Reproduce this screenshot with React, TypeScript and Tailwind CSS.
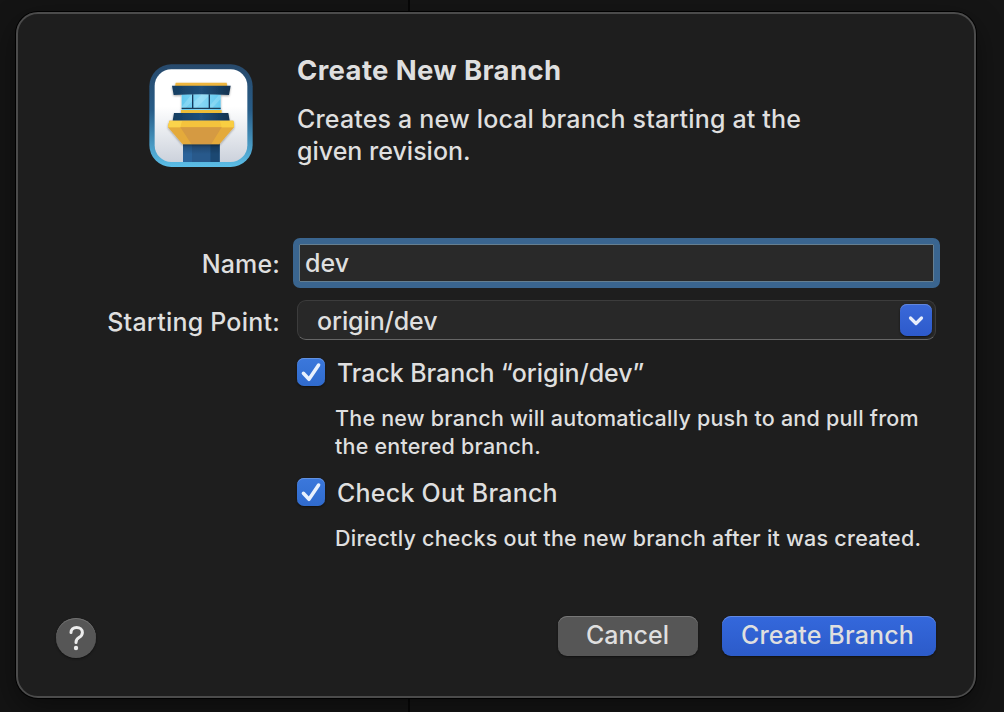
import React, { useState } from "react";

function TowerIcon() {
  return (
    <svg width="104" height="104" viewBox="27 27 312 312" className="block shrink-0" aria-hidden="true">
      <defs>
        <linearGradient id="frame" x1="0" y1="0" x2="0" y2="1">
          <stop offset="0" stopColor="#27496b" />
          <stop offset="0.45" stopColor="#285d88" />
          <stop offset="1" stopColor="#5cbfe8" />
        </linearGradient>
        <linearGradient id="sky" x1="0" y1="0" x2="0" y2="1">
          <stop offset="0.4" stopColor="#ffffff" />
          <stop offset="1" stopColor="#ccd2dc" />
        </linearGradient>
        <linearGradient id="navy" x1="0" y1="0" x2="1" y2="0">
          <stop offset="0" stopColor="#163d60" />
          <stop offset="0.5" stopColor="#20507a" />
          <stop offset="1" stopColor="#14324f" />
        </linearGradient>
        <linearGradient id="glass" x1="0" y1="0" x2="1" y2="0">
          <stop offset="0" stopColor="#62c8ee" />
          <stop offset="0.5" stopColor="#86d8f5" />
          <stop offset="1" stopColor="#62c8ee" />
        </linearGradient>
        <linearGradient id="shaft" x1="0" y1="0" x2="0" y2="1">
          <stop offset="0" stopColor="#000000" stopOpacity="0.3" />
          <stop offset="0.6" stopColor="#000000" stopOpacity="0" />
        </linearGradient>
        <filter id="soft" x="-20%" y="-20%" width="140%" height="140%">
          <feDropShadow dx="0" dy="3" stdDeviation="3" floodColor="#000" floodOpacity="0.35" />
        </filter>
      </defs>
      <rect x="28" y="28" width="310" height="308" rx="66" fill="url(#frame)" />
      <rect x="44" y="43" width="278" height="278" rx="50" fill="url(#sky)" />
      <path d="M129 262H239V321H129Z" fill="#2b639a" />
      <path d="M156 262H211V321H156Z" fill="#28598b" />
      <path d="M211 262H239V321H211Z" fill="#1b4872" />
      <path d="M129 262H239V321H129Z" fill="url(#shaft)" />
      <g filter="url(#soft)">
        <path d="M107 83H260L262 96H105Z" fill="#eeb53c" />
        <path d="M125 118H242V166H125Z" fill="url(#glass)" />
        <path d="M125 155L155 118H160V135L136 160H125Z" fill="#b1e7fa" opacity="0.35" />
        <path d="M162 140L186 118H205V124L168 160H162Z" fill="#c2effd" opacity="0.3" />
        <path d="M211 150L236 121H242V132L216 160H211Z" fill="#b1e7fa" opacity="0.35" />
        <path d="M158 118V162M208 118V162" stroke="#15385a" strokeWidth="4" />
        <path d="M125 160H242" stroke="#1a3c59" strokeWidth="4" />
        <path d="M96 92H272L267 120Q184 116 101 120Z" fill="url(#navy)" />
        <path d="M123 165H245V176H123Z" fill="#efbe39" />
        <path d="M102 174H265L269 197H98Z" fill="url(#navy)" />
        <path d="M88 197H280L282 217L238 268H128L84 217Z" fill="#e4aa3b" />
        <path d="M84 217L88 197H280L282 217H240L124 217Z" fill="#f4c33d" />
        <path d="M88 198H126L121 217H84Z" fill="#fbd34b" />
        <path d="M240 198H280L282 217H245Z" fill="#f9ce42" />
        <path d="M121 217H245L214 267H154Z" fill="#d59a42" />
      </g>
    </svg>
  );
}

type OptionProps = {
  label: string;
  labelClass: string;
  checked: boolean;
  onToggle: () => void;
};

function CheckOption({ label, labelClass, checked, onToggle }: OptionProps) {
  return (
    <button
      type="button"
      role="checkbox"
      aria-checked={checked}
      onClick={onToggle}
      className="flex h-7 items-center gap-3 whitespace-nowrap text-left text-[25px] leading-7"
    >
      <span className="h-7 w-7 shrink-0 rounded-[7px] bg-linear-to-b from-[#3b78dc] to-[#306bce] shadow-[inset_0_1px_0_#6292e2,0_1px_2px_#111111]">
        {checked && (
          <svg width="28" height="28" viewBox="0 0 28 28" fill="none" aria-hidden="true">
            <path d="M6.4 15.3L12 21.3L21.6 7" stroke="#e9f1fd" strokeWidth="3.5" strokeLinecap="round" strokeLinejoin="round" />
          </svg>
        )}
      </span>
      <span className={labelClass}>{label}</span>
    </button>
  );
}

export default function App() {
  const [name, setName] = useState("dev");
  const [track, setTrack] = useState(true);
  const [checkout, setCheckout] = useState(true);

  return (
    <div className="flex h-[712px] w-[1004px] items-start overflow-hidden bg-[linear-gradient(to_right,#141414_408px,#070707_408px,#070707_410px,#151515_410px)] pl-4 pt-3 font-['Inter','Liberation_Sans',sans-serif] font-[450] text-[#dfdfdf]">
      <div
        role="dialog"
        aria-label="Create New Branch"
        className="flex h-[686px] w-[960px] shrink-0 flex-col rounded-[22px] border-2 border-[#4b4b4b] bg-[#1e1e1e] shadow-[0_0_0_1px_#000000,0_10px_30px_#00000070]"
      >
        <header className="flex h-[224px] items-start pl-[131px] pt-[40px]">
          <div className="pt-[10px]">
            <TowerIcon />
          </div>
          <div className="ml-[44px] whitespace-nowrap text-[25px] leading-8">
            <h1 className="text-[27.5px] font-bold leading-8 tracking-[0.35px]">Create New Branch</h1>
            <p className="mt-[17px] tracking-[0.17px]">
              Creates a new local branch starting at the
              <br />
              <span className="tracking-[0px]">given revision.</span>
            </p>
          </div>
        </header>

        <div className="grid grid-cols-[262px_647px] items-center gap-x-[13px] text-[25px] leading-8">
          <label htmlFor="branch-name" className="pt-[2px] text-right tracking-[0.15px]">Name:</label>
          <input
            id="branch-name"
            value={name}
            onChange={(e) => setName(e.target.value)}
            className="h-[50px] w-full rounded-[7px] border-6 border-[#3a658f] bg-[#292929] bg-clip-padding px-[6px] shadow-[inset_0_0_0_1px_#657f91] outline-none"
          />
        </div>

        <div className="mt-3 grid grid-cols-[262px_639px] items-center gap-x-[17px] text-[25px] leading-8">
          <span className="whitespace-nowrap pt-[4px] text-right tracking-[0.22px]">Starting Point:</span>
          <div className="flex h-10 items-center justify-between rounded-[9px] border border-[#3c3c3c] border-b-[#666666] bg-[#282828] pl-[19px] pr-[3px]">
            <span className="pt-[2px] tracking-[-0.1px]">origin/dev</span>
            <button
              type="button"
              aria-label="Show branches"
              className="flex h-8 w-8 items-center justify-center rounded-[7px] bg-linear-to-b from-[#3a69d9] to-[#2d5acb] shadow-[inset_0_1px_0_#6286db,0_1px_2px_#111111]"
            >
              <svg width="32" height="32" viewBox="0 0 32 32" fill="none" aria-hidden="true">
                <path d="M10.5 14L16 19.5L21.5 14" stroke="#e7edfb" strokeWidth="3.2" strokeLinecap="round" strokeLinejoin="round" />
              </svg>
            </button>
          </div>
        </div>

        <div className="ml-[279px] mt-[18px] flex flex-col items-start">
          <CheckOption label="Track Branch “origin/dev”" labelClass="pt-[2px] tracking-[-0.08px]" checked={track} onToggle={() => setTrack(!track)} />
          <p className="ml-[38px] mt-[18px] whitespace-nowrap text-[21.5px] leading-7 tracking-[0.21px]">
            The new branch will automatically push to and pull from
            <br />
            the entered branch.
          </p>
          <div className="mt-[18px]">
            <CheckOption label="Check Out Branch" labelClass="pt-[2px] tracking-[0.23px]" checked={checkout} onToggle={() => setCheckout(!checkout)} />
          </div>
          <p className="ml-[38px] mt-[18px] whitespace-nowrap text-[21.5px] leading-7 tracking-[0.24px]">
            Directly checks out the new branch after it was created.
          </p>
        </div>

        <footer className="mb-[38px] mt-auto flex h-[42px] items-start pl-[38px] pr-[38px] text-[25px] leading-8">
          <button
            type="button"
            aria-label="Help"
            className="mt-[2px] flex h-10 w-10 items-center justify-center rounded-full bg-[#565656] shadow-[inset_0_1px_0_#707070,0_1px_2px_#111111]"
          >
            <svg width="40" height="40" viewBox="0 0 40 40" fill="none" aria-hidden="true">
              <path d="M15 14.5C15 11.5 17.2 9.5 20.6 9.5C24 9.5 26.4 11.5 26.4 14.4C26.4 16.8 25.2 18.2 23 19.6C20.8 21 20 22 20 24.4" stroke="#ececec" strokeWidth="3" strokeLinecap="round" strokeLinejoin="round" />
              <circle cx="20" cy="30" r="2.2" fill="#ececec" />
            </svg>
          </button>
          <button
            type="button"
            className="ml-auto h-10 w-[140px] rounded-[9px] bg-[#565656] pb-[2px] pr-px text-center shadow-[inset_0_1px_0_#777777,0_1px_2px_#111111]"
          >
            Cancel
          </button>
          <button
            type="button"
            className="ml-6 h-10 w-[214px] whitespace-nowrap rounded-[9px] bg-linear-to-b from-[#3468dc] to-[#2c5bc9] pb-[2px] pr-[3px] tracking-[0.15px] shadow-[inset_0_1px_0_#6289e2,0_1px_2px_#111111]"
          >
            Create Branch
          </button>
        </footer>
      </div>
    </div>
  );
}
